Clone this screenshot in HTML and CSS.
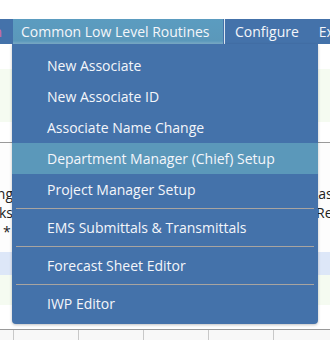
FILE: index.html
```html
<!DOCTYPE html>
<html lang="en">
<head>
    <meta charset="UTF-8">
    <title>Menu</title>
    <link rel="stylesheet" href="styles.css">
</head>
<body>
    <div class="topgap"></div>
    <div class="menubar">
        <div class="menu-item prev"><span>Admin</span></div>
        <div class="menu-item active">Common Low Level Routines</div>
        <div class="menu-divider"></div>
        <div class="menu-item">Configure</div>
        <div class="menu-item">Export</div>
    </div>

    <div class="page">
        <div class="band white h25"></div>
        <div class="band green h53"></div>
        <div class="band white h20"></div>
        <div class="band rule"></div>
        <div class="band light rows">
            <div class="row-line">
                <span class="cell-left">Tracking</span>
                <span class="cell-right">Last</span>
            </div>
            <div class="row-line">
                <span class="cell-left">Links</span>
                <span class="cell-right indent">Rev</span>
            </div>
            <div class="row-line">
                <span class="cell-left star">*</span>
                <span class="cell-right"></span>
            </div>
        </div>
        <div class="band blue h23"></div>
        <div class="band green h30"></div>
        <div class="band white h24"></div>
        <div class="band rule"></div>
        <div class="grid-row">
            <div class="grid-cell first"></div>
            <div class="grid-cell"></div>
            <div class="grid-cell"></div>
            <div class="grid-cell"></div>
            <div class="grid-cell"></div>
            <div class="grid-cell"></div>
        </div>
    </div>

    <div class="dropdown">
        <div class="drop-item">New Associate</div>
        <div class="drop-item">New Associate ID</div>
        <div class="drop-item">Associate Name Change</div>
        <div class="drop-item selected">Department Manager (Chief) Setup</div>
        <div class="drop-item">Project Manager Setup</div>
        <div class="drop-sep"></div>
        <div class="drop-item">EMS Submittals &amp; Transmittals</div>
        <div class="drop-sep"></div>
        <div class="drop-item">Forecast Sheet Editor</div>
        <div class="drop-sep"></div>
        <div class="drop-item">IWP Editor</div>
    </div>
</body>
</html>
```

FILE: styles.css
```css
body {
    margin: 0;
    width: 330px;
    height: 340px;
    overflow: hidden;
    position: relative;
    background-color: white;
    font-family: "Open Sans", "Noto Sans", sans-serif;
    font-size: 14px;
}
.topgap {
    height: 19px;
}
.menubar {
    display: flex;
    height: 25px;
    background-color: #4472aa;
    color: #f4f6fa;
    white-space: nowrap;
    overflow: hidden;
}
.menu-item {
    flex-shrink: 0;
    line-height: 25px;
    padding: 0 10px;
}
.menu-item.prev {
    display: flex;
    justify-content: flex-end;
    width: 13px;
    padding: 0 11px 0 0;
    box-sizing: border-box;
    overflow: hidden;
    color: #d86aa0;
}
.menu-item.prev span {
    flex-shrink: 0;
}
.menu-item.active {
    width: 210px;
    padding: 0 0 0 8px;
    box-sizing: border-box;
    background: linear-gradient(#5b9cc0, #5b98ba 88%, #7fb0cc);
}
.menu-divider {
    flex-shrink: 0;
    width: 1px;
    margin-left: 1px;
    background-color: #dfe8f2;
}
.page {
    display: flex;
    flex-direction: column;
}
.band.white { background-color: white; }
.band.green { background-color: #f5fbf1; }
.band.blue { background-color: #dde7f8; }
.band.light { background-color: #fdfdfd; }
.h25 { height: 25px; }
.h53 { height: 53px; }
.h20 { height: 20px; }
.h23 { height: 23px; }
.h30 { height: 30px; }
.h24 { height: 24px; }
.band.rule {
    height: 1px;
    background-color: #9a9a9a;
}
.rows {
    padding: 41px 0 11px;
    color: #222;
}
.row-line {
    display: flex;
    justify-content: space-between;
    height: 19px;
    line-height: 19px;
}
.cell-left {
    width: 13px;
    overflow: hidden;
    display: flex;
    justify-content: flex-end;
}
.cell-left.star {
    justify-content: flex-start;
    padding-left: 3px;
    box-sizing: border-box;
}
.cell-right {
    width: 19px;
    overflow: hidden;
    white-space: nowrap;
}
.cell-right.indent {
    padding-left: 5px;
    box-sizing: border-box;
}
.grid-row {
    display: flex;
    height: 20px;
    background-color: #f8f8f8;
}
.grid-cell {
    width: 65px;
    flex-shrink: 0;
    border-right: 1px solid #c8c8c8;
    box-sizing: border-box;
}
.grid-cell.first {
    width: 14px;
}
.dropdown {
    position: absolute;
    left: 12px;
    top: 44px;
    width: 306px;
    padding: 6px 0 5px;
    background-color: #4472aa;
    border-radius: 0 0 4px 4px;
    box-shadow: 0 1px 3px rgba(0, 0, 0, 0.25);
    color: #f4f6fa;
}
.drop-item {
    height: 31px;
    line-height: 31px;
    padding-left: 35px;
    white-space: nowrap;
}
.drop-item.selected {
    background-color: #5b98ba;
}
.drop-sep {
    height: 1px;
    margin: 3px 4px;
    background-color: #a8a4a0;
}
```
